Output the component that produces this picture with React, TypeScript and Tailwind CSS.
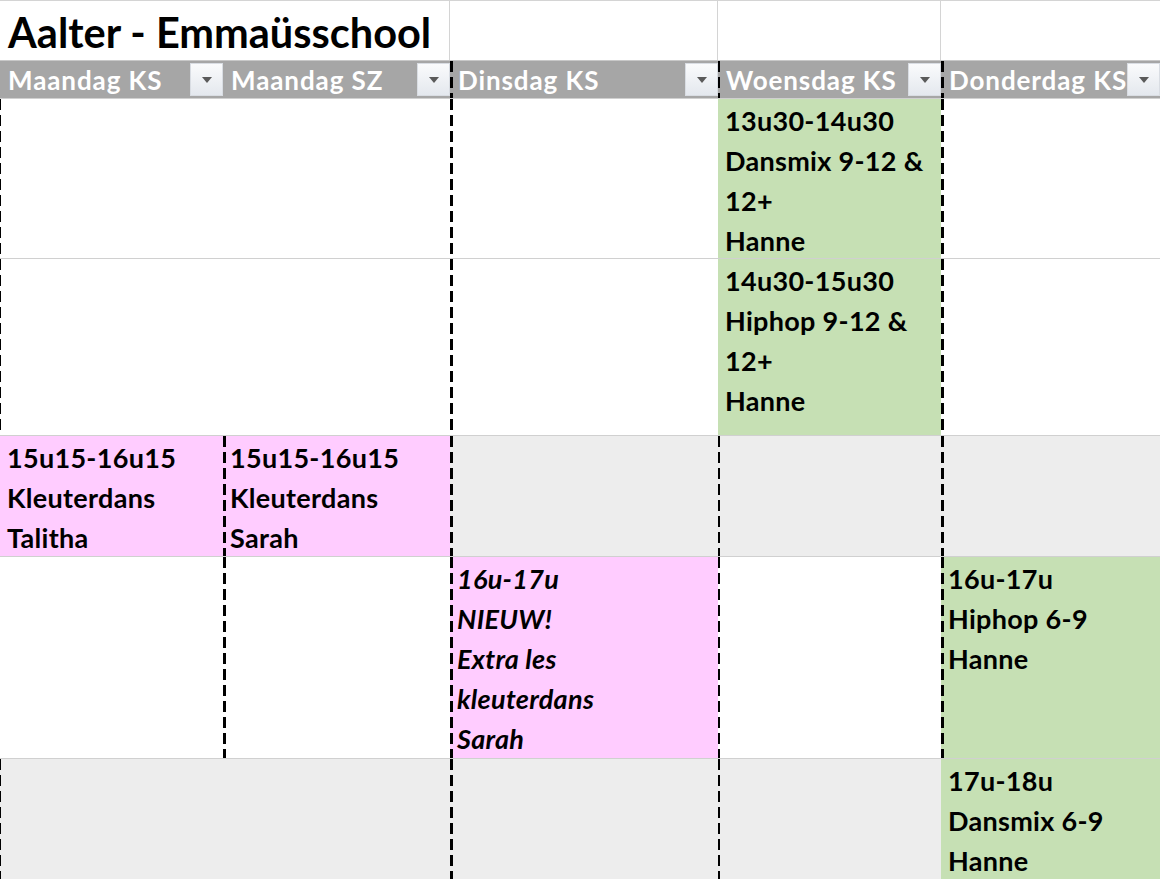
import React from 'react'

type Dash = 'none' | 'thin' | 'mid' | 'thick'

const dashCls: Record<Dash, string> = {
  none: '',
  thin: 'bg-[image:repeating-linear-gradient(to_bottom,#000_0_11px,transparent_11px_16px)] bg-no-repeat bg-[length:1px_100%]',
  mid: 'bg-[image:repeating-linear-gradient(to_bottom,#000_0_11px,transparent_11px_16px)] bg-no-repeat bg-[length:2px_100%]',
  thick: 'bg-[image:repeating-linear-gradient(to_bottom,#000_0_11px,transparent_11px_16px)] bg-no-repeat bg-[length:3px_100%]',
}

const fillCls = {
  white: 'bg-white',
  band: 'bg-[#ededed]',
  green: 'bg-[#c6e0b4]',
  pink: 'bg-[#ffccff]',
}

type Cell = {
  fill: keyof typeof fillCls
  dash: Dash
  lines?: string[]
  italic?: boolean
}

const headers: { label: string; dash: Dash }[] = [
  { label: 'Maandag KS', dash: 'none' },
  { label: 'Maandag SZ', dash: 'none' },
  { label: 'Dinsdag KS', dash: 'thick' },
  { label: 'Woensdag KS', dash: 'mid' },
  { label: 'Donderdag KS', dash: 'thick' },
]

const rows: { h: string; cells: Cell[] }[] = [
  {
    h: 'h-[160px]',
    cells: [
      { fill: 'white', dash: 'thin' },
      { fill: 'white', dash: 'none' },
      { fill: 'white', dash: 'thick' },
      { fill: 'green', dash: 'none', lines: ['13u30-14u30', 'Dansmix 9-12 &', '12+', 'Hanne'] },
      { fill: 'white', dash: 'thick' },
    ],
  },
  {
    h: 'h-[177px]',
    cells: [
      { fill: 'white', dash: 'thin' },
      { fill: 'white', dash: 'none' },
      { fill: 'white', dash: 'thick' },
      { fill: 'green', dash: 'none', lines: ['14u30-15u30', 'Hiphop 9-12 &', '12+', 'Hanne'] },
      { fill: 'white', dash: 'thick' },
    ],
  },
  {
    h: 'h-[121px]',
    cells: [
      { fill: 'pink', dash: 'none', lines: ['15u15-16u15', 'Kleuterdans', 'Talitha'] },
      { fill: 'pink', dash: 'thick', lines: ['15u15-16u15', 'Kleuterdans', 'Sarah'] },
      { fill: 'band', dash: 'thick' },
      { fill: 'band', dash: 'mid' },
      { fill: 'band', dash: 'thick' },
    ],
  },
  {
    h: 'h-[202px]',
    cells: [
      { fill: 'white', dash: 'none' },
      { fill: 'white', dash: 'thick' },
      {
        fill: 'pink',
        dash: 'thick',
        italic: true,
        lines: ['16u-17u', 'NIEUW!', 'Extra les', 'kleuterdans', 'Sarah'],
      },
      { fill: 'white', dash: 'mid' },
      { fill: 'green', dash: 'thick', lines: ['16u-17u', 'Hiphop 6-9', 'Hanne'] },
    ],
  },
  {
    h: 'h-[125px]',
    cells: [
      { fill: 'band', dash: 'thin' },
      { fill: 'band', dash: 'none' },
      { fill: 'band', dash: 'thick' },
      { fill: 'band', dash: 'mid' },
      { fill: 'green', dash: 'none', lines: ['17u-18u', 'Dansmix 6-9', 'Hanne'] },
    ],
  },
]

const FilterButton: React.FC = () => (
  <div className="flex h-[33px] w-[33px] shrink-0 items-center justify-center border border-[#d9dde3] bg-gradient-to-b from-[#fafbfc] to-[#e4e8ee]">
    <svg width="10" height="6" viewBox="0 0 10 6">
      <path d="M0 0h10L5 6z" fill="#5a5a5a" />
    </svg>
  </div>
)

const App: React.FC = () => {
  return (
    <div className="h-[879px] w-[1160px] overflow-hidden bg-white font-[Lato,sans-serif] font-bold text-black">
      <div className="grid grid-cols-[223px_227px_268px_223px_1fr]">
        {/* title row */}
        <div className="col-span-2 flex h-[60px] items-center border-t border-r border-[#d4d4d4] pl-2 pt-1">
          <h1 className="whitespace-nowrap text-[41.5px] leading-none">Aalter - Emmaüsschool</h1>
        </div>
        <div className="h-[60px] border-t border-r border-[#d4d4d4]" />
        <div className="h-[60px] border-t border-r border-[#d4d4d4]" />
        <div className="h-[60px] border-t border-[#d4d4d4]" />

        {/* header row */}
        {headers.map((hd) => (
          <div
            key={hd.label}
            className={`flex h-[38px] items-center justify-between overflow-hidden border-t border-[#c8c8c8] bg-[#a6a6a6] pl-2 text-[26px] tracking-[0.9px] text-white ${dashCls[hd.dash]}`}
          >
            <span className="whitespace-nowrap leading-none">{hd.label}</span>
            <FilterButton />
          </div>
        ))}

        {/* body rows */}
        {rows.map((row, ri) =>
          row.cells.map((c, ci) => (
            <div
              key={`${ri}-${ci}`}
              className={`${row.h} overflow-hidden border-t border-[#d0d0d0] pl-[7px] pt-[2px] ${fillCls[c.fill]} ${dashCls[c.dash]} ${
                c.italic ? 'italic' : ''
              }`}
            >
              {c.lines?.map((l) => (
                <div key={l} className="whitespace-nowrap text-[27px] leading-[40px] tracking-[0.3px]">
                  {l}
                </div>
              ))}
            </div>
          ))
        )}
      </div>
    </div>
  )
}

export default App
